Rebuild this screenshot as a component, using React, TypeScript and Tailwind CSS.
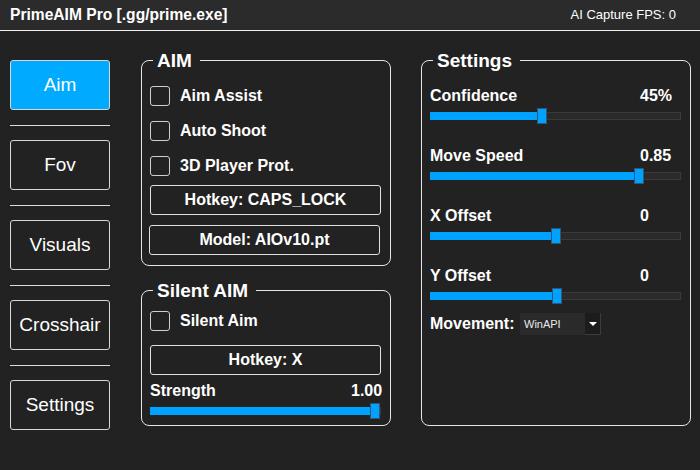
import React from "react";

const FONT = { fontFamily: '"Liberation Sans", Arial, sans-serif' };

function NavButton({ label, active }: { label: string; active?: boolean }) {
  return (
    <div
      className={
        "h-[50px] w-[100px] rounded-[3px] border border-[#d8d8d8] flex items-center justify-center text-[19px] text-white " +
        (active ? "bg-[#00aaff]" : "bg-[#222222]")
      }
    >
      {label}
    </div>
  );
}

function Separator() {
  return <div className="mt-[15px] mb-[14px] h-px w-[100px] bg-[#dcdcdc]" />;
}

function GroupBox({
  title,
  className,
  children,
}: {
  title: string;
  className: string;
  children: React.ReactNode;
}) {
  return (
    <div className={"relative rounded-[8px] border border-[#e6e6e6] " + className}>
      <span className="absolute left-[11px] -top-[11px] bg-[#222222] pl-[4px] pr-[8px] text-[19px] leading-[22px] font-bold text-white">
        {title}
      </span>
      {children}
    </div>
  );
}

function Checkbox({ label }: { label: string }) {
  return (
    <div className="flex h-5 items-center gap-[10px]">
      <div className="h-5 w-5 rounded-[3px] border border-[#cfcfcf] bg-[#222222]" />
      <span className="text-[16px] font-bold text-white">{label}</span>
    </div>
  );
}

function Button({ label, className }: { label: string; className?: string }) {
  return (
    <div
      className={
        "flex h-[30px] w-[231px] items-center justify-center rounded-[3px] border border-[#e0e0e0] text-[16px] font-bold text-white " +
        (className ?? "")
      }
    >
      {label}
    </div>
  );
}

function Slider({ wide, thumb }: { wide?: boolean; thumb: number }) {
  return (
    <div className={"relative h-4 " + (wide ? "w-[251px]" : "w-[231px]")}>
      <div className="absolute left-0 right-0 top-[4px] h-2 border border-[#3a3a3a] bg-[#2a2a2a]" />
      <div className="absolute left-0 top-[4px] h-2 bg-[#00a2ff]" style={{ width: thumb + 2 }} />
      <div
        className="absolute top-0 h-4 w-[10px] border border-[#2f5673] bg-[#00a2ff]"
        style={{ left: thumb }}
      />
    </div>
  );
}

function SettingRow({ label, value, thumb, first }: { label: string; value: string; thumb: number; first?: boolean }) {
  return (
    <div className={first ? "" : "mt-[22px]"}>
      <div className="grid h-[18px] grid-cols-[210px_1fr] text-[16px] leading-[20px] font-bold text-white">
        <span>{label}</span>
        <span>{value}</span>
      </div>
      <div className="mt-[4px]">
        <Slider wide thumb={thumb} />
      </div>
    </div>
  );
}

export default function App() {
  return (
    <div className="h-[470px] w-[700px] overflow-hidden bg-[#222222]" style={FONT}>
      {/* Title bar */}
      <div className="flex h-[31px] items-center justify-between border-b border-[#f0f0f0] bg-[#2b2b2b] pl-[10px] pr-[24px]">
        <span className="text-[15.6px] font-bold text-white">PrimeAIM Pro [.gg/prime.exe]</span>
        <span className="text-[13px] text-white">AI Capture FPS: 0</span>
      </div>

      {/* Body */}
      <div className="flex pl-[10px] pt-[29px]">
        {/* Nav */}
        <div className="flex w-[100px] flex-col">
          <NavButton label="Aim" active />
          <Separator />
          <NavButton label="Fov" />
          <Separator />
          <NavButton label="Visuals" />
          <Separator />
          <NavButton label="Crosshair" />
          <Separator />
          <NavButton label="Settings" />
        </div>

        {/* Middle column */}
        <div className="ml-[31px] flex w-[250px] flex-col">
          <GroupBox title="AIM" className="h-[206px] w-[250px] pl-[8px] pt-[25px]">
            <div className="flex flex-col gap-[15px]">
              <Checkbox label="Aim Assist" />
              <Checkbox label="Auto Shoot" />
              <Checkbox label="3D Player Prot." />
            </div>
            <Button label="Hotkey: CAPS_LOCK" className="mt-[9px]" />
            <Button label="Model: AIOv10.pt" className="mt-[10px] -ml-px" />
          </GroupBox>

          <GroupBox title="Silent AIM" className="mt-[24px] h-[136px] w-[250px] pl-[8px] pt-[20px]">
            <Checkbox label="Silent Aim" />
            <Button label="Hotkey: X" className="mt-[14px]" />
            <div className="mt-[6px] grid h-[18px] grid-cols-[201px_1fr] text-[16px] leading-[20px] font-bold text-white">
              <span>Strength</span>
              <span>1.00</span>
            </div>
            <div className="mt-[4px]">
              <Slider thumb={220} />
            </div>
          </GroupBox>
        </div>

        {/* Settings */}
        <GroupBox title="Settings" className="ml-[30px] h-[366px] w-[270px] pl-[8px] pt-[25px]">
          <SettingRow first label="Confidence" value="45%" thumb={107} />
          <SettingRow label="Move Speed" value="0.85" thumb={204} />
          <SettingRow label="X Offset" value="0" thumb={121} />
          <SettingRow label="Y Offset" value="0" thumb={122} />
          <div className="mt-[9px] flex h-[22px] items-center">
            <span className="w-[90px] text-[16px] font-bold text-white">Movement:</span>
            <div className="flex h-[22px] w-[81px] bg-[#2a2a2a]">
              <span className="flex-1 pl-[4px] text-[11px] leading-[22px] text-[#e8e8e8]">WinAPI</span>
              <div className="flex h-[22px] w-[16px] items-center justify-center border-b border-r border-[#3c3c3c] bg-[#1c1c1c]">
                <svg width="8" height="4" viewBox="0 0 8 4">
                  <path d="M0 0 L8 0 L4 4 Z" fill="#ffffff" />
                </svg>
              </div>
            </div>
          </div>
        </GroupBox>
      </div>
    </div>
  );
}
